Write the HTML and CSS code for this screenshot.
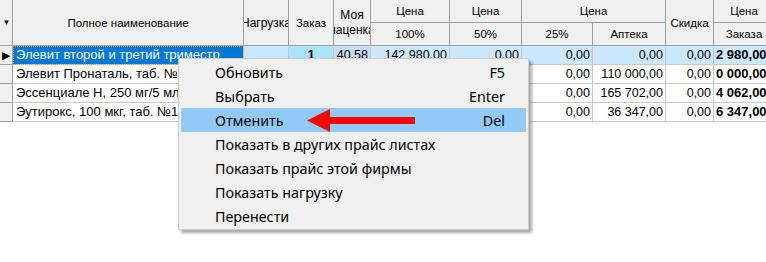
FILE: index.html
```html
<!DOCTYPE html>
<html lang="ru">
<head>
    <meta charset="UTF-8">
    <title>Заказ</title>
    <link rel="stylesheet" href="styles.css">
</head>
<body>
    <div class="screen">
        <!-- таблица заказа -->
        <div class="grid">
            <div class="hd ind r2"><span class="sort">&#9660;</span></div>
            <div class="hd r2">Полное наименование</div>
            <div class="hd r2 clip"><span>Нагрузка</span></div>
            <div class="hd r2">Заказ</div>
            <div class="hd r2 clip two"><span>Моя<br>наценка</span></div>
            <div class="hd">Цена</div>
            <div class="hd">Цена</div>
            <div class="hd c2">Цена</div>
            <div class="hd r2">Скидка</div>
            <div class="hd">Цена</div>

            <div class="hd">100%</div>
            <div class="hd">50%</div>
            <div class="hd">25%</div>
            <div class="hd">Аптека</div>
            <div class="hd">Заказа</div>

            <div class="cell ind sel-ind"><span class="mark">&#9654;</span></div>
            <div class="cell name focus">Элевит второй и третий триместр</div>
            <div class="cell row-sel"></div>
            <div class="cell row-sel order">1</div>
            <div class="cell row-sel num markup">40,58</div>
            <div class="cell row-sel num">142 980,00</div>
            <div class="cell row-sel num">0,00</div>
            <div class="cell row-sel num">0,00</div>
            <div class="cell row-sel num">0,00</div>
            <div class="cell row-sel num">0,00</div>
            <div class="cell row-sel total">2 980,00</div>

            <div class="cell ind"></div>
            <div class="cell name">Элевит Пронаталь, таб. №100</div>
            <div class="cell"></div>
            <div class="cell order"></div>
            <div class="cell num"></div>
            <div class="cell num"></div>
            <div class="cell num"></div>
            <div class="cell num">0,00</div>
            <div class="cell num">110 000,00</div>
            <div class="cell num">0,00</div>
            <div class="cell total">0 000,00</div>

            <div class="cell ind"></div>
            <div class="cell name">Эссенциале Н, 250 мг/5 мл, амп.</div>
            <div class="cell"></div>
            <div class="cell order"></div>
            <div class="cell num"></div>
            <div class="cell num"></div>
            <div class="cell num"></div>
            <div class="cell num">0,00</div>
            <div class="cell num">165 702,00</div>
            <div class="cell num">0,00</div>
            <div class="cell total">4 062,00</div>

            <div class="cell ind"></div>
            <div class="cell name">Эутирокс, 100 мкг, таб. №100</div>
            <div class="cell"></div>
            <div class="cell order"></div>
            <div class="cell num"></div>
            <div class="cell num"></div>
            <div class="cell num"></div>
            <div class="cell num">0,00</div>
            <div class="cell num">36 347,00</div>
            <div class="cell num">0,00</div>
            <div class="cell total">6 347,00</div>
        </div>

        <!-- контекстное меню -->
        <ul class="menu">
            <li><span>Обновить</span><span>F5</span></li>
            <li><span>Выбрать</span><span>Enter</span></li>
            <li class="hot"><span>Отменить</span><span>Del</span></li>
            <li><span>Показать в других прайс листах</span></li>
            <li><span>Показать прайс этой фирмы</span></li>
            <li><span>Показать нагрузку</span></li>
            <li><span>Перенести</span></li>
        </ul>

        <svg class="arrow" width="112" height="27" viewBox="0 0 112 27">
            <polygon points="2,13.5 25,2 25,10 110,10 110,17 25,17 25,25" fill="#f00"/>
        </svg>
    </div>
</body>
</html>
```

FILE: styles.css
```css
body {
    margin: 0;
    background-color: #ffffff;
    overflow: hidden;
}

.screen {
    position: relative;
    width: 766px;
    height: 262px;
    overflow: hidden;
    background-color: #ffffff;
}

/* сетка */
.grid {
    display: grid;
    grid-template-columns: 13px 231px 45px 45px 37px 79px 72px 71px 73px 48px 61px;
    grid-template-rows: 23px 23px 19px 19px 19px 19px;
    width: 775px;
    font-family: "Liberation Sans", Arial, sans-serif;
    color: #000;
}

.hd {
    display: flex;
    align-items: center;
    justify-content: center;
    box-sizing: border-box;
    background-color: #f0f0f0;
    border-right: 1px solid #a0a0a0;
    border-bottom: 1px solid #a0a0a0;
    font-size: 11.5px;
    white-space: nowrap;
    overflow: hidden;
}

.hd.r2 {
    grid-row: span 2;
}

.hd.c2 {
    grid-column: span 2;
}

.hd.clip span {
    display: block;
    text-align: center;
    font-size: 12px;
}

.hd.two {
    line-height: 15px;
}

.sort {
    font-size: 8px;
    margin-left: 1px;
}

.cell {
    box-sizing: border-box;
    border-right: 1px solid #c8c8c8;
    border-bottom: 1px solid #c8c8c8;
    font-size: 13px;
    line-height: 18px;
    padding: 0 2px;
    white-space: nowrap;
    overflow: hidden;
}

.cell.ind {
    background-color: #f0f0f0;
    border-right-color: #a0a0a0;
    border-bottom-color: #a0a0a0;
    padding: 0;
}

.mark {
    display: block;
    font-size: 11px;
    line-height: 18px;
    padding-left: 2px;
}

.cell.name {
    padding-left: 3px;
}

.cell.focus {
    background-color: #0078d7;
    color: #ffffff;
    outline: 1px dotted #e0a050;
    outline-offset: -1px;
}

.row-sel {
    background-color: #cce8ff;
}

.cell.order {
    text-align: center;
    font-weight: bold;
}

.row-sel.order {
    background-color: #aae6fb;
}

.row-sel.markup {
    background-color: #c9def6;
}

.num {
    text-align: right;
    font-size: 12.5px;
}

.total {
    font-weight: bold;
    padding-left: 2px;
}

/* контекстное меню */
.menu {
    position: absolute;
    left: 178px;
    top: 58px;
    width: 351px;
    box-sizing: border-box;
    margin: 0;
    padding: 1px 0;
    list-style: none;
    background-color: #f0f0f0;
    border: 1px solid #cccccc;
    box-shadow: 3px 3px 3px rgba(0, 0, 0, 0.35);
    font-family: "Noto Sans", "Open Sans", sans-serif;
    font-size: 14.3px;
    color: #000;
}

.menu li {
    display: flex;
    justify-content: space-between;
    align-items: center;
    height: 24px;
    margin: 0 2px;
    padding: 0 21px 0 34px;
}

.menu li.hot {
    background-color: #91c9f7;
}

.arrow {
    position: absolute;
    left: 305px;
    top: 107px;
}
```
